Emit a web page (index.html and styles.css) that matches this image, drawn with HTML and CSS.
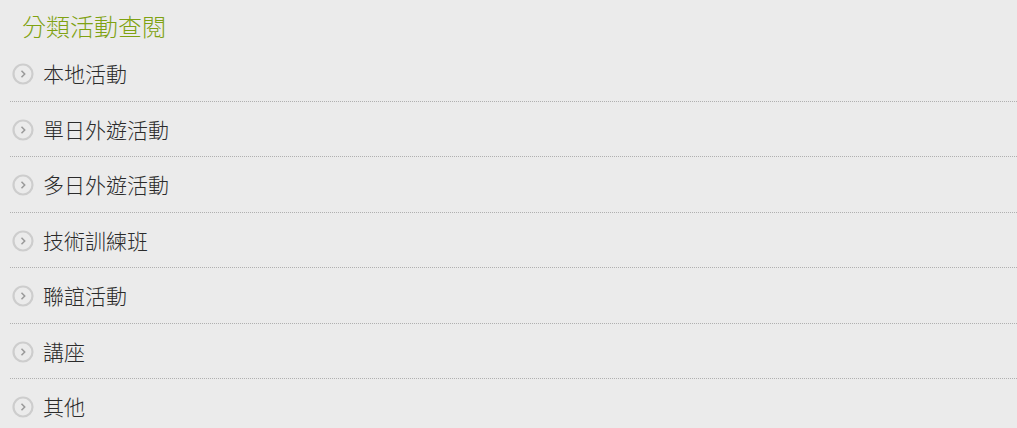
FILE: index.html
```html
<!DOCTYPE html>
<html lang="zh-Hant">
<head>
    <meta charset="UTF-8">
    <title>分類活動查閱</title>
    <link rel="stylesheet" href="styles.css">
</head>
<body>
    <div class="category-box">
        <h2 class="category-title">分類活動查閱</h2>
        <ul class="category-list">
            <li><a href="#"><span class="arrow-icon"><svg viewBox="0 0 22 22" width="22" height="22"><circle cx="11" cy="11" r="9.5" fill="none" stroke="#cdcdcd" stroke-width="2.2"/><path d="M9.5 7.8 L12.7 11 L9.5 14.2" fill="none" stroke="#999" stroke-width="1.5"/></svg></span>本地活動</a></li>
            <li><a href="#"><span class="arrow-icon"><svg viewBox="0 0 22 22" width="22" height="22"><circle cx="11" cy="11" r="9.5" fill="none" stroke="#cdcdcd" stroke-width="2.2"/><path d="M9.5 7.8 L12.7 11 L9.5 14.2" fill="none" stroke="#999" stroke-width="1.5"/></svg></span>單日外遊活動</a></li>
            <li><a href="#"><span class="arrow-icon"><svg viewBox="0 0 22 22" width="22" height="22"><circle cx="11" cy="11" r="9.5" fill="none" stroke="#cdcdcd" stroke-width="2.2"/><path d="M9.5 7.8 L12.7 11 L9.5 14.2" fill="none" stroke="#999" stroke-width="1.5"/></svg></span>多日外遊活動</a></li>
            <li><a href="#"><span class="arrow-icon"><svg viewBox="0 0 22 22" width="22" height="22"><circle cx="11" cy="11" r="9.5" fill="none" stroke="#cdcdcd" stroke-width="2.2"/><path d="M9.5 7.8 L12.7 11 L9.5 14.2" fill="none" stroke="#999" stroke-width="1.5"/></svg></span>技術訓練班</a></li>
            <li><a href="#"><span class="arrow-icon"><svg viewBox="0 0 22 22" width="22" height="22"><circle cx="11" cy="11" r="9.5" fill="none" stroke="#cdcdcd" stroke-width="2.2"/><path d="M9.5 7.8 L12.7 11 L9.5 14.2" fill="none" stroke="#999" stroke-width="1.5"/></svg></span>聯誼活動</a></li>
            <li><a href="#"><span class="arrow-icon"><svg viewBox="0 0 22 22" width="22" height="22"><circle cx="11" cy="11" r="9.5" fill="none" stroke="#cdcdcd" stroke-width="2.2"/><path d="M9.5 7.8 L12.7 11 L9.5 14.2" fill="none" stroke="#999" stroke-width="1.5"/></svg></span>講座</a></li>
            <li><a href="#"><span class="arrow-icon"><svg viewBox="0 0 22 22" width="22" height="22"><circle cx="11" cy="11" r="9.5" fill="none" stroke="#cdcdcd" stroke-width="2.2"/><path d="M9.5 7.8 L12.7 11 L9.5 14.2" fill="none" stroke="#999" stroke-width="1.5"/></svg></span>其他</a></li>
        </ul>
    </div>
</body>
</html>
```

FILE: styles.css
```css
body {
    margin: 0;
    background-color: #ebebeb;
    font-family: "Noto Sans CJK TC", "Noto Sans", sans-serif;
}
.category-box {
    padding: 0 0 0 10px;
}
.category-title {
    margin: 0;
    padding: 10px 0 0 12px;
    height: 36px;
    font-size: 24px;
    font-weight: 300;
    line-height: 32px;
    color: #7fa212;
}
.category-list {
    list-style: none;
    margin: 0;
    padding: 0;
}
.category-list li {
    border-bottom: 1px dotted #b0b0b0;
}
.category-list li:last-child {
    border-bottom: none;
}
.category-list a {
    display: flex;
    align-items: center;
    height: 54.5px;
    text-decoration: none;
    color: #2b2b2b;
    font-size: 21px;
    font-weight: 300;
}
.arrow-icon {
    display: flex;
    margin: 2px 9px 0 2px;
}
```
